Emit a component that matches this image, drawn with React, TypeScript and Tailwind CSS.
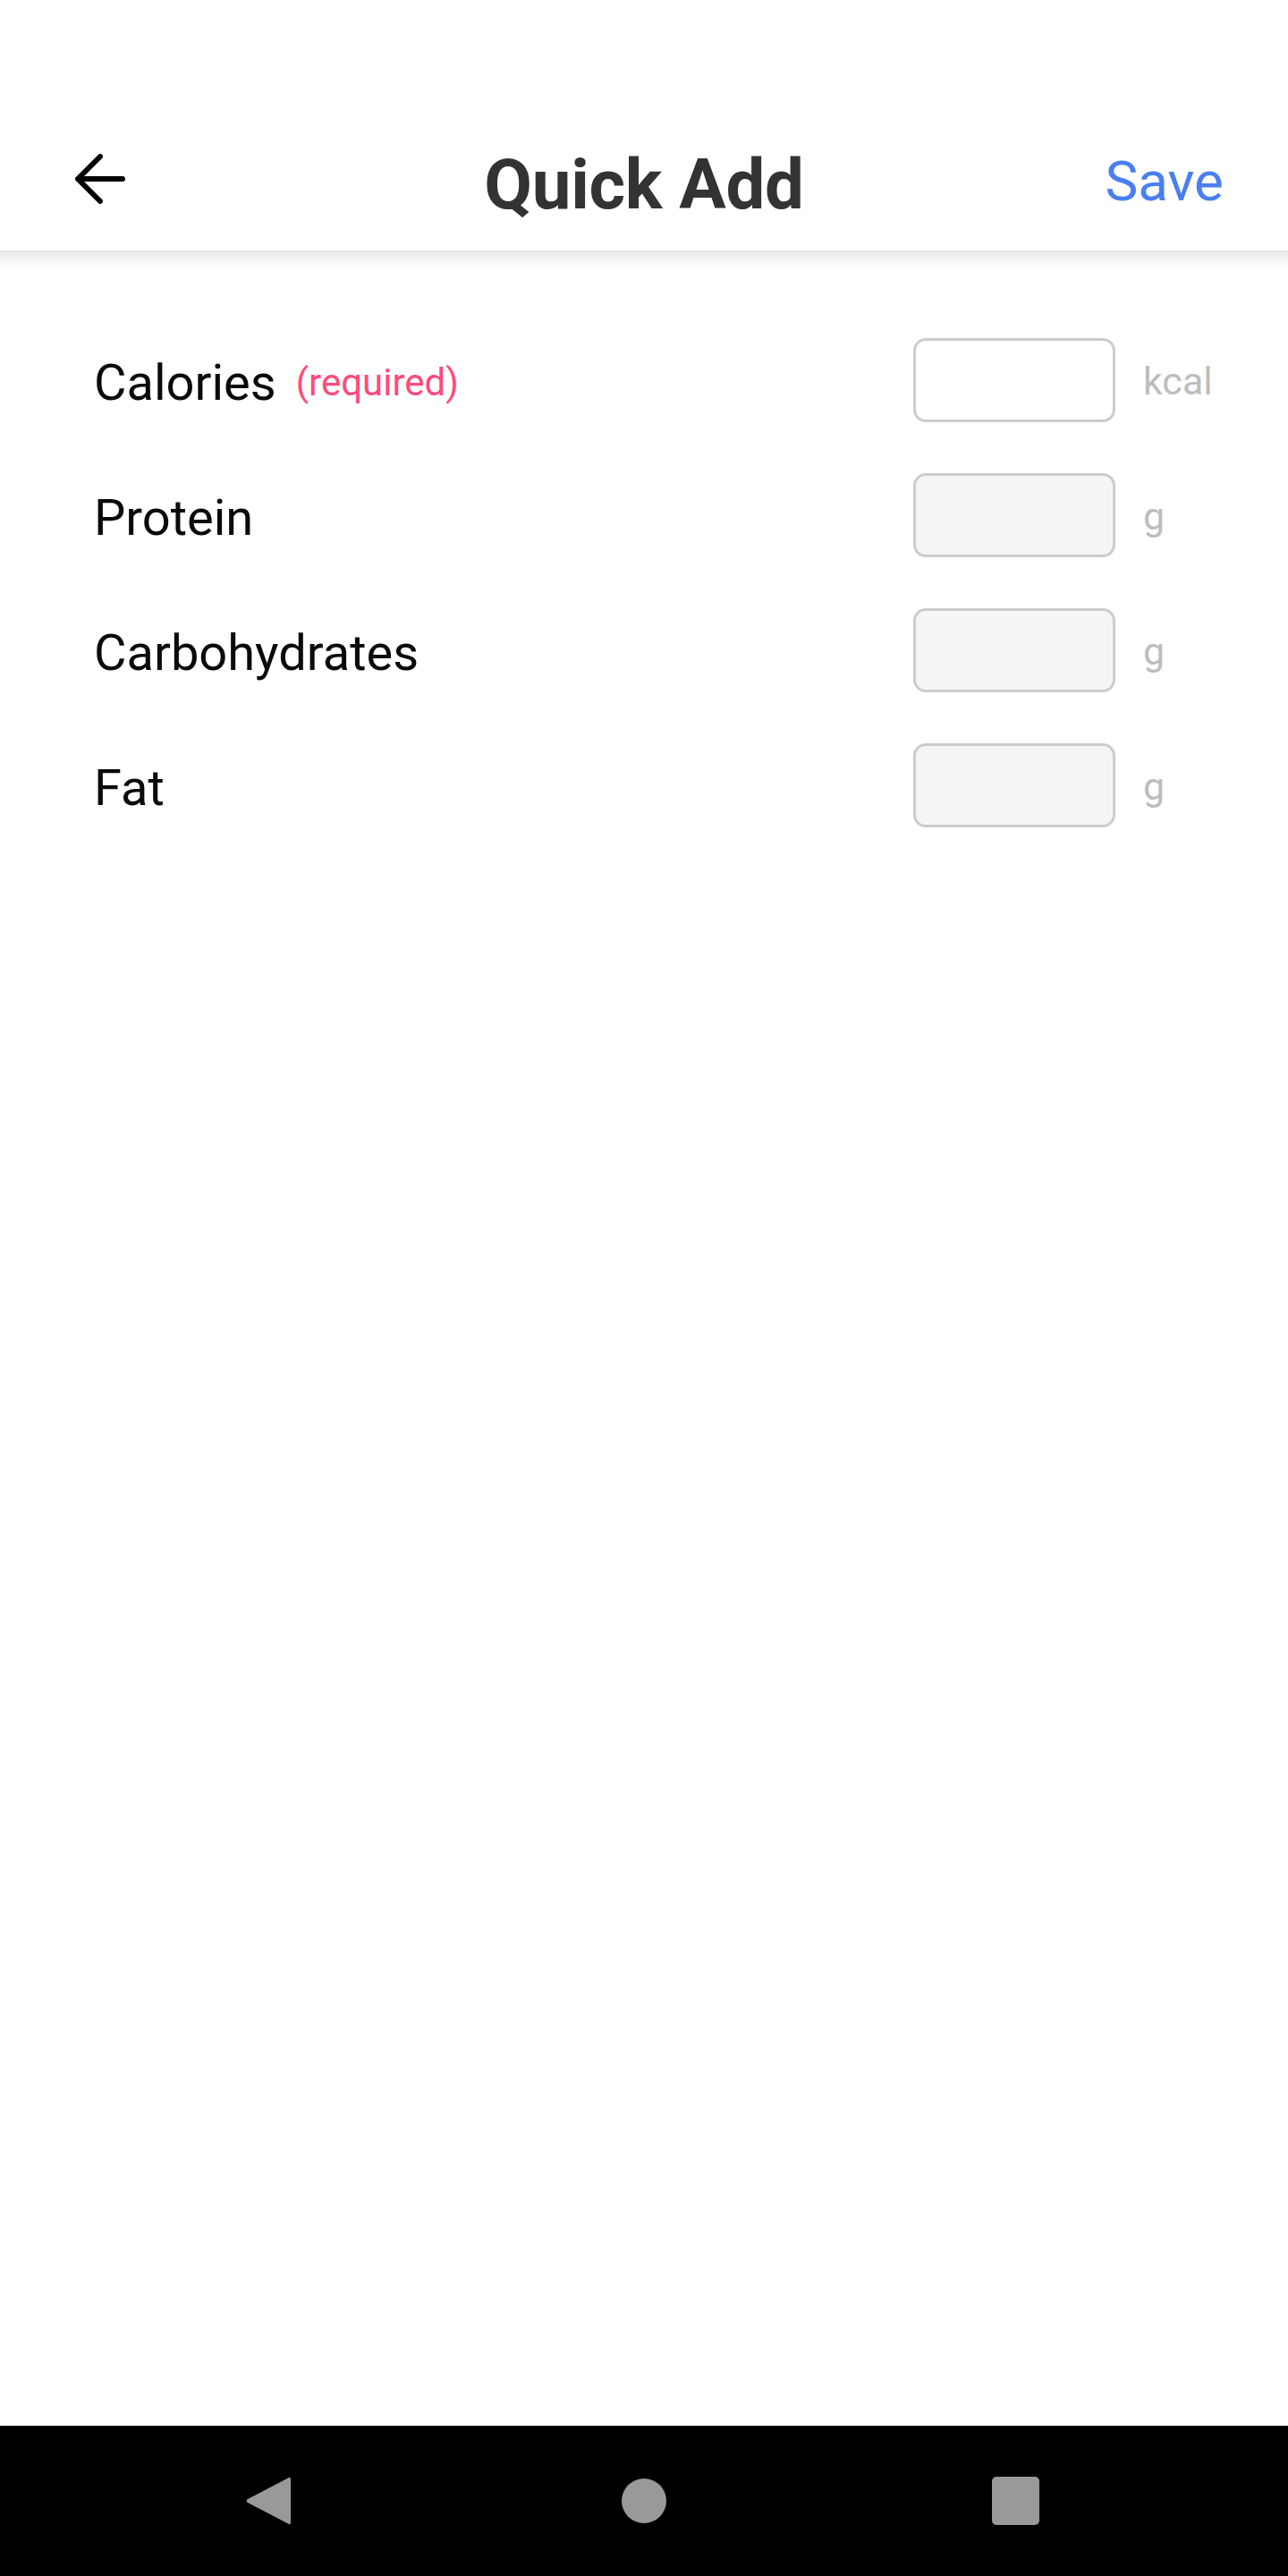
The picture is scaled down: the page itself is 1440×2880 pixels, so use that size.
import React from "react";

const rows = [
  { label: "Calories", required: true, unit: "kcal", white: true },
  { label: "Protein", required: false, unit: "g", white: false },
  { label: "Carbohydrates", required: false, unit: "g", white: false },
  { label: "Fat", required: false, unit: "g", white: false },
];

export default function App() {
  return (
    <div
      className="w-[1440px] h-[2880px] flex flex-col bg-white overflow-hidden"
      style={{ fontFamily: "Roboto, 'Noto Sans', sans-serif" }}
    >
      {/* Header */}
      <header className="h-[280px] shrink-0 bg-white pt-[122px]">
        <div className="h-[158px] grid grid-cols-[1fr_auto_1fr] items-start">
          <div className="flex items-start pl-[84px] pt-[50px]">
            <svg width="56" height="56" viewBox="0 0 56 56" fill="none">
              <path
                d="M53 28H4M28 3L3 28L28 53"
                stroke="#000"
                strokeWidth="6"
                strokeLinecap="round"
                strokeLinejoin="round"
              />
            </svg>
          </div>
          <div className="text-[78px] font-bold text-[#333333] leading-[78px] pt-[46px] tracking-[-0.3px]">
            Quick Add
          </div>
          <div className="flex justify-end pr-[72px] pt-[50px]">
            <span className="text-[62px] leading-[62px] text-[#4a7ff2]">Save</span>
          </div>
        </div>
      </header>
      <div className="h-[20px] shrink-0 bg-gradient-to-b from-[#e4e4e4] via-[#f5f5f5] to-white" />

      {/* Form */}
      <main className="flex-1 flex flex-col gap-[57px] pt-[78px] pl-[105px] pr-[105px]">
        {rows.map((r) => (
          <div key={r.label} className="flex items-center h-[94px]">
            <div className="flex-1 flex items-center pt-[5px]">
              <span className="text-[56px] leading-[56px] text-[#0a0a0a]">{r.label}</span>
              {r.required && (
                <span className="text-[42px] leading-[42px] text-[#ff4a7d] ml-[22px]">(required)</span>
              )}
            </div>
            <div
              className={
                "w-[226px] h-[94px] rounded-[14px] border-[3px] border-[#cccccc] " +
                (r.white ? "bg-white" : "bg-[#f5f5f5]")
              }
            />
            <div className="w-[57px] ml-[31px] pt-[3px] text-[43px] leading-[43px] text-[#bdbdbd] whitespace-nowrap">
              {r.unit}
            </div>
          </div>
        ))}
      </main>

      {/* Navigation bar */}
      <nav className="h-[168px] shrink-0 bg-black flex items-center pl-[270px]">
        <div className="w-[60px] flex justify-center">
          <svg width="52" height="56" viewBox="0 0 52 56">
            <path
              d="M49 2 Q51 1 51 4 L51 52 Q51 55 49 54 L3 30 Q0 28 3 26 Z"
              fill="#999999"
            />
          </svg>
        </div>
        <div className="w-[60px] ml-[360px] flex justify-center">
          <div className="w-[50px] h-[50px] rounded-full bg-[#999999]" />
        </div>
        <div className="w-[60px] ml-[355px] flex justify-center">
          <div className="w-[53px] h-[54px] rounded-[5px] bg-[#999999]" />
        </div>
      </nav>
    </div>
  );
}
